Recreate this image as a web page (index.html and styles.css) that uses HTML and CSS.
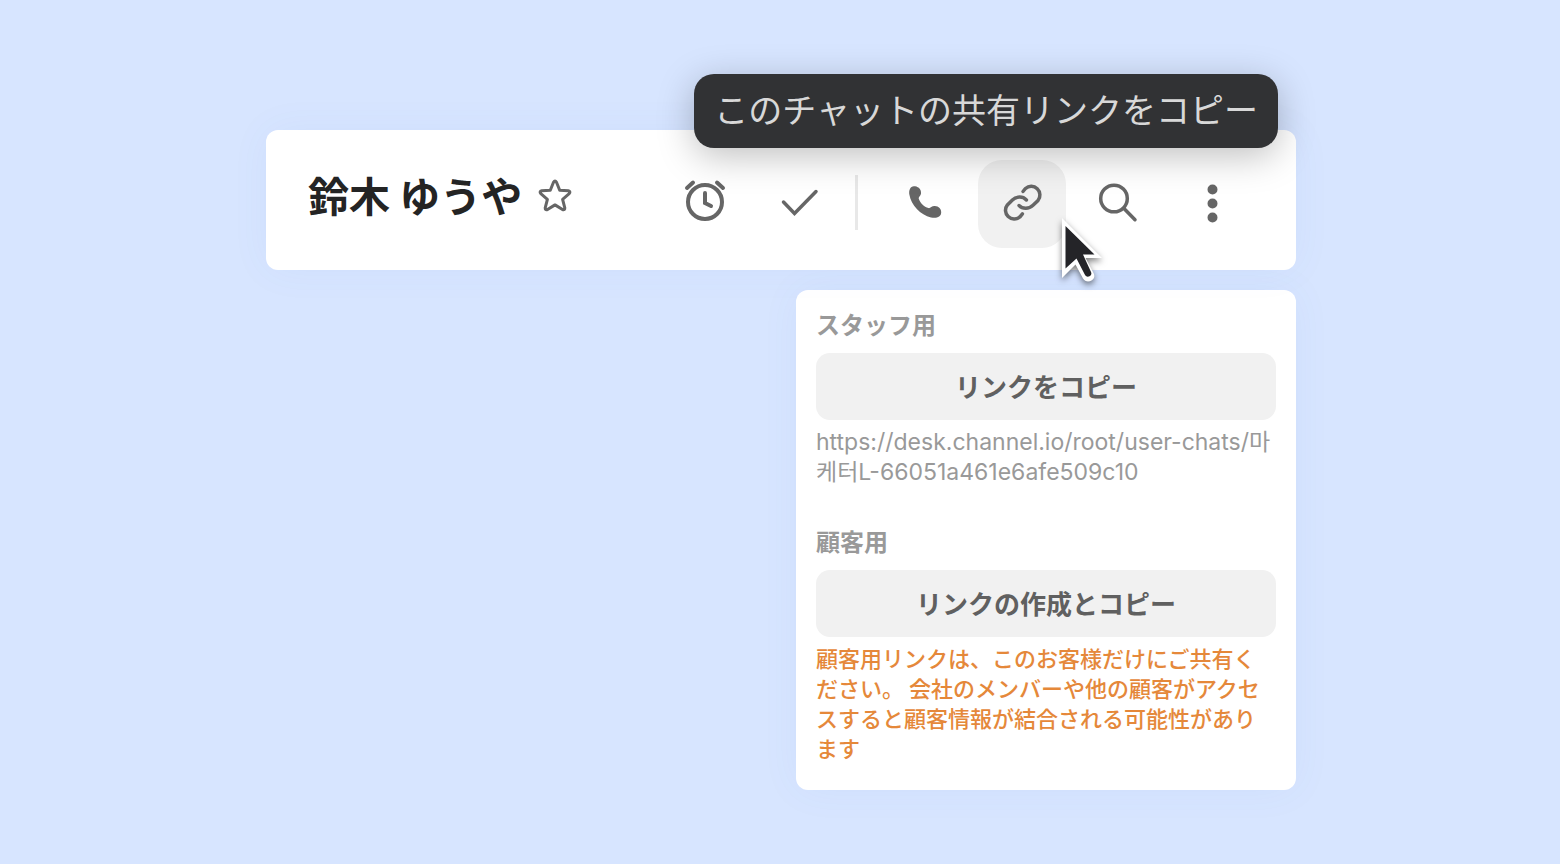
FILE: index.html
```
<!DOCTYPE html>
<html lang="ja">
<head>
  <meta charset="UTF-8">
  <meta name="viewport" content="width=device-width, initial-scale=1.0">
  <title>鈴木 ゆうや</title>
  <link rel="stylesheet" href="styles.css">
</head>
<body>
  <main class="container">
    <!-- チャットヘッダー -->
    <header class="chat-header">
      <h1>鈴木 ゆうや</h1>
      <button class="star" aria-label="お気に入り">
        <svg width="36" height="36" viewBox="0 0 36 36"><path d="M16.5 4.3 Q18 1.8 19.5 4.3 L22.7 12.2 L31.3 12.8 Q34 13.4 32.2 15.7 L25.6 21.3 L27.8 29.8 Q28 32.5 25.5 31.5 L18 26.9 L10.5 31.5 Q8 32.5 8.2 29.8 L10.4 21.3 L3.8 15.7 Q2 13.4 4.7 12.8 L13.3 12.2 Z"/></svg>
      </button>

      <div class="actions">
        <button class="icon-button" aria-label="スヌーズ">
          <svg viewBox="0 0 88 88">
            <circle cx="45" cy="42" r="17"/>
            <path d="M27 28l6-5.500M63 28l-6-5.500M45 33v10l6 3"/>
          </svg>
        </button>
        <button class="icon-button" aria-label="完了">
          <svg viewBox="0 0 88 88"><path class="thin" d="M28.5 42l11 11.5 21.5-22"/></svg>
        </button>
        <span class="divider"></span>
        <button class="icon-button" aria-label="電話">
          <svg viewBox="0 0 88 88"><path class="fill" d="M32 26.3c4.200.7 6.300 3.500 6 7.200-.2 2.500-2.700 3.400-2.200 5.300 1.300 4.200 5.200 8 9.700 9.300 1.700.5 3.200-2.200 6.300-2 4 .2 6.600 3 6.400 6.700-.3 4.300-4.800 5.700-10.200 4.600-10.500-2.300-20-12.500-21.600-22.700-.8-4.600 1-9.200 5.600-8.400z"/></svg>
        </button>
        <div class="copy-link">
          <button class="icon-button active" aria-label="リンク" aria-describedby="tip">
            <svg viewBox="0 0 88 88">
              <path class="thin" d="M45 31.500l2.500-3a8.700 8.700 0 0 1 12.500 12L55 45.300C50.500 49.500 44.500 49 41 45.500"/>
              <path class="thin" d="M45 31.500l2.500-3a8.700 8.700 0 0 1 12.500 12L55 45.300C50.500 49.500 44.500 49 41 45.500" transform="rotate(180 44.700 42.700)"/>
            </svg>
          </button>
          <svg class="cursor" width="48" height="72" viewBox="0 0 48 72">
            <path class="cursor-edge" d="M4 4v60l13.500-13.500 7.500 14c2 3.500 6 3.500 8.500 2 3-1.800 3.500-4.500 2-7.500L27.500 44H44z"/>
            <path class="cursor-body" d="M7.500 12v42.500l11-10 8 15.500c1.200 2.500 3 3.200 5 2.200 2-1 2.400-2.700 1.200-5L25 40.500h11.500z"/>
          </svg>
        </div>
        <button class="icon-button" aria-label="検索">
          <svg viewBox="0 0 88 88"><circle class="thin" cx="41" cy="38.500" r="13.300"/><path class="thin" d="M51 48.500l11 11.200"/></svg>
        </button>
        <button class="icon-button" aria-label="その他">
          <svg viewBox="0 0 88 88"><path class="fill" d="M39.500 29.500a5 5 0 1 0 10 0a5 5 0 1 0-10 0M39.500 43.500a5 5 0 1 0 10 0a5 5 0 1 0-10 0M39.500 57.500a5 5 0 1 0 10 0a5 5 0 1 0-10 0"/></svg>
        </button>
      </div>

      <div class="tooltip" id="tip" role="tooltip">このチャットの共有リンクをコピー</div>
    </header>

    <!-- 共有リンクのメニュー -->
    <div class="panel">
      <section>
        <h2>スタッフ用</h2>
        <button class="button">リンクをコピー</button>
        <p class="url">https://desk.channel.io/root/user-chats/마케터L-66051a461e6afe509c10</p>
      </section>
      <section>
        <h2>顧客用</h2>
        <button class="button">リンクの作成とコピー</button>
        <p class="warning">顧客用リンクは、このお客様だけにご共有ください。 会社のメンバーや他の顧客がアクセスすると顧客情報が結合される可能性があります</p>
      </section>
    </div>
  </main>
</body>
</html>
```
FILE: styles.css
```
/* 基本設定 */
* {
  box-sizing: border-box;
}
body {
  margin: 0;
  background-color: #d7e5ff;
  font-family: "Noto Sans CJK JP", sans-serif;
}
h1, h2, p {
  margin: 0;
}
button {
  border: none;
  padding: 0;
  background: none;
  font-family: inherit;
  cursor: pointer;
}
svg {
  display: block;
  fill: none;
  stroke: #666;
  stroke-width: 4;
  stroke-linecap: round;
}

.container {
  max-width: 1032px;
  margin: 0 auto;
  padding: 130px 0 74px 2px;
}

/* チャットヘッダー */
.chat-header {
  position: relative;
  display: flex;
  align-items: center;
  padding: 30px 40px 22px 42px;
  background-color: #fff;
  border-radius: 12px;
  box-shadow: 0 0 40px rgba(80, 110, 200, 0.05);
}
h1 {
  font-size: 41px;
  line-height: 60px;
  color: #242424;
  margin-bottom: 20px;
}
.star {
  margin: 0 0 16px 15px;
}
.star svg {
  stroke-width: 3;
  stroke-linejoin: round;
}

.actions {
  display: flex;
  align-items: center;
  gap: 7px;
  margin-left: auto;
}
.icon-button {
  display: block;
  width: 88px;
  height: 88px;
  border-radius: 24px;
}
.icon-button.active {
  background-color: #f1f1f1;
}
.thin {
  stroke-width: 3.5;
}
.fill {
  fill: #666;
  stroke: none;
}
.divider {
  width: 3px;
  height: 55px;
  margin: 0 18px 4px 5px;
  background-color: #e8e8e8;
}

/* マウスカーソル */
.copy-link {
  position: relative;
}
.cursor {
  position: absolute;
  left: 80px;
  top: 54px;
  z-index: 2;
  stroke: none;
  overflow: visible;
  filter: drop-shadow(0 3px 3px rgba(0, 0, 0, 0.5));
}
.cursor-edge {
  fill: #fff;
}
.cursor-body {
  fill: #242428;
}

/* ツールチップ */
.tooltip {
  position: absolute;
  top: -56px;
  right: 18px;
  padding: 10px 20px 14px;
  border-radius: 20px;
  background-color: #313234;
  color: #d8d8d8;
  font-size: 34px;
  line-height: 50px;
  white-space: nowrap;
  box-shadow: 0 8px 36px rgba(0, 0, 0, 0.25);
}

/* 共有リンクのメニュー */
.panel {
  display: flex;
  flex-direction: column;
  gap: 36px;
  max-width: 500px;
  margin: 20px 0 0 auto;
  padding: 16px 20px 28px;
  background-color: #fff;
  border-radius: 12px;
  box-shadow: 0 0 40px rgba(80, 110, 200, 0.05);
}
h2 {
  font-size: 24px;
  line-height: 36px;
  color: #999;
  margin-bottom: 11px;
}
.button {
  display: block;
  width: 100%;
  height: 67px;
  margin-bottom: 7px;
  padding-bottom: 3px;
  border-radius: 14px;
  background-color: #f1f1f1;
  color: #606060;
  font-size: 26px;
  font-weight: bold;
}
.url {
  font-family: Inter, "Noto Sans CJK KR", sans-serif;
  font-size: 23px;
  line-height: 30px;
  color: #999;
  word-break: break-all;
}
.warning {
  margin-top: -2px;
  font-size: 22px;
  font-weight: 500;
  line-height: 30px;
  color: #e5883a;
}
```
